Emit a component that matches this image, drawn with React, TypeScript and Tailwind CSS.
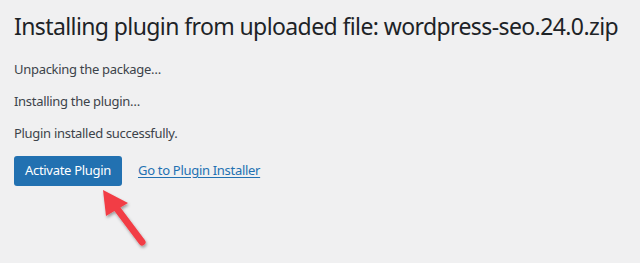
export default function App() {
  const steps = ['Unpacking the package…', 'Installing the plugin…', 'Plugin installed successfully.']

  return (
    <div className="relative h-[263px] w-[640px] overflow-hidden bg-[#f0f0f1] pl-[14px] pt-[11px] font-['Noto_Sans',sans-serif]">
      <h1 className="whitespace-nowrap text-[23px] leading-[30px] font-normal tracking-[-0.6px] text-[#1d2327]">
        Installing plugin from uploaded file: wordpress-seo.24.0.zip
      </h1>

      <div className="mt-[18px] flex flex-col gap-[12px]">
        {steps.map((s) => (
          <p key={s} className="whitespace-nowrap text-[13px] leading-[20px] tracking-[-0.3px] text-[#3c434a]">
            {s}
          </p>
        ))}
      </div>

      <div className="mt-[13px] flex items-center gap-[16px]">
        <button className="h-[30px] w-[108px] whitespace-nowrap rounded-[3px] bg-[#2271b1] text-[13px] tracking-[-0.3px] text-white">
          Activate Plugin
        </button>
        <a href="#" className="whitespace-nowrap text-[13px] tracking-[-0.3px] text-[#2271b1] underline underline-offset-2">
          Go to Plugin Installer
        </a>
      </div>

      {/* annotation arrow */}
      <svg className="absolute left-[95px] top-[184px]" width="60" height="70" viewBox="0 0 60 70">
        <defs>
          <filter id="sh" x="-30%" y="-30%" width="160%" height="160%">
            <feDropShadow dx="1" dy="2" stdDeviation="1.5" floodColor="#000" floodOpacity="0.35" />
          </filter>
        </defs>
        <g filter="url(#sh)">
          <line x1="47" y1="58" x2="20" y2="22" stroke="#f23d45" strokeWidth="7" strokeLinecap="round" />
          <polygon points="8,6 33,19 11,32" fill="#f23d45" />
        </g>
      </svg>
    </div>
  )
}
